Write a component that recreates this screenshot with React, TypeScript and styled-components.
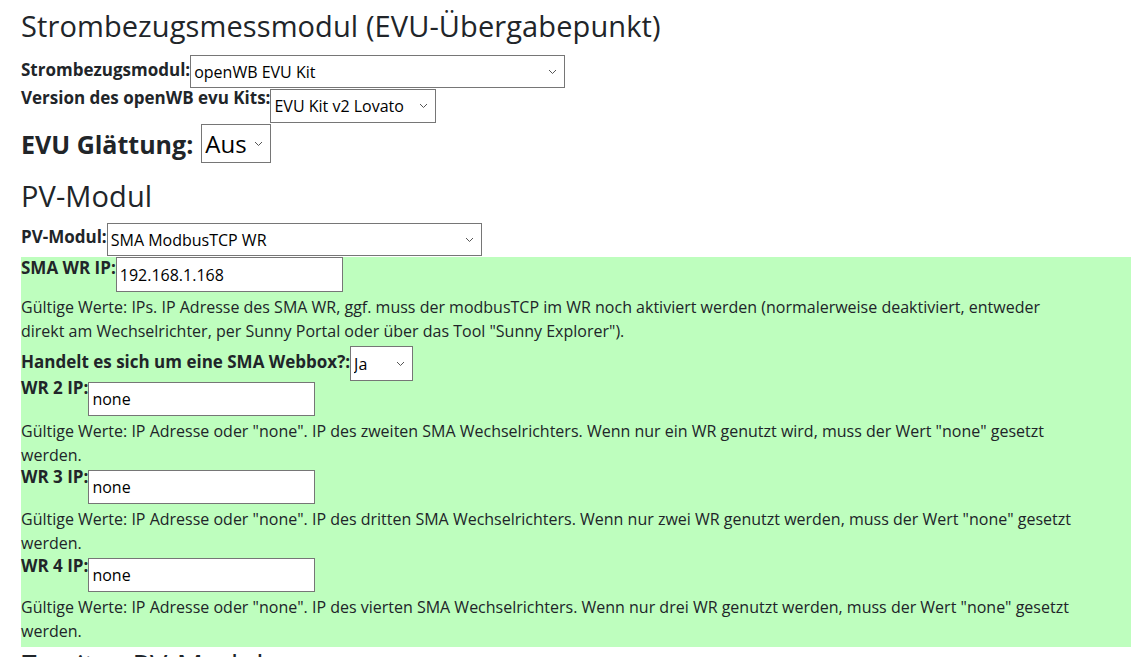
import React from "react";
import styled, { createGlobalStyle } from "styled-components";

const GlobalStyle = createGlobalStyle`
  body {
    margin: 0;
    background: #fff;
    color: #212529;
    font-family: "Open Sans", "Noto Sans", sans-serif;
    font-size: 16px;
  }
`;

const Page = styled.div`
  padding: 0 7px 0 21px;
  overflow: hidden;
  height: 657px;
`;

const SectionTitle = styled.h3<{ $top: number; $bottom: number }>`
  font-size: 29px;
  font-weight: 400;
  line-height: 34px;
  margin: ${(p) => p.$top}px 0 ${(p) => p.$bottom}px 0;
  letter-spacing: 0.1px;
`;

const FieldRow = styled.div<{ $gap?: number }>`
  display: flex;
  align-items: flex-start;
  margin-bottom: ${(p) => p.$gap ?? 1}px;
`;

const BigRow = styled.div`
  display: flex;
  align-items: center;
  gap: 8px;
`;

const FieldLabel = styled.label<{ $base: number }>`
  font-weight: 700;
  font-size: 17px;
  line-height: 16px;
  margin-top: ${(p) => p.$base - 14}px;
  white-space: nowrap;
`;

const BigLabel = styled.label`
  font-weight: 700;
  font-size: 25px;
  line-height: 30px;
`;

const SelectWrap = styled.div<{ $width: number; $height: number }>`
  position: relative;
  width: ${(p) => p.$width}px;
  height: ${(p) => p.$height}px;
  flex: none;
`;

const Select = styled.select<{ $size?: number }>`
  appearance: none;
  -webkit-appearance: none;
  width: 100%;
  height: 100%;
  box-sizing: border-box;
  border: 1px solid #767676;
  border-radius: 0;
  background: #fff;
  color: #000;
  font-family: "Open Sans", "Noto Sans", sans-serif;
  font-size: ${(p) => p.$size ?? 16}px;
  padding: 0 20px 0 3px;
  margin: 0;
  outline: none;
`;

const Chevron = styled.svg`
  position: absolute;
  right: 8px;
  top: 50%;
  margin-top: -3px;
  width: 9px;
  height: 6px;
  pointer-events: none;
`;

const TextInput = styled.input<{ $width: number; $height: number }>`
  box-sizing: border-box;
  width: ${(p) => p.$width}px;
  height: ${(p) => p.$height}px;
  border: 1px solid #767676;
  background: #fff;
  color: #000;
  font-family: "Open Sans", "Noto Sans", sans-serif;
  font-size: 16px;
  padding: 0 3px;
  margin: 0;
  flex: none;
  outline: none;
`;

const Highlight = styled.div`
  background: #befebe;
  width: 1110px;
  padding-bottom: 1px;
`;

const Help = styled.p`
  margin: 3px 0 3px 0;
  line-height: 24px;
  font-size: 16px;
`;

type DropProps = {
  value: string;
  width: number;
  height: number;
  size?: number;
};

const Dropdown = ({ value, width, height, size }: DropProps) => (
  <SelectWrap $width={width} $height={height}>
    <Select $size={size} defaultValue={value}>
      <option>{value}</option>
    </Select>
    <Chevron viewBox="0 0 9 6">
      <path d="M1 1l3.5 3.5L8 1" fill="none" stroke="#555" strokeWidth="1" />
    </Chevron>
  </SelectWrap>
);

export default function App() {
  return (
    <>
      <GlobalStyle />
      <Page>
        <SectionTitle $top={9} $bottom={12}>
          Strombezugsmessmodul (EVU-Übergabepunkt)
        </SectionTitle>
        <FieldRow>
          <FieldLabel $base={21}>Strombezugsmodul:</FieldLabel>
          <Dropdown value="openWB EVU Kit" width={375} height={33} />
        </FieldRow>
        <FieldRow>
          <FieldLabel $base={15}>Version des openWB evu Kits:</FieldLabel>
          <Dropdown value="EVU Kit v2 Lovato" width={166} height={34} />
        </FieldRow>
        <BigRow>
          <BigLabel>EVU Glättung:</BigLabel>
          <Dropdown value="Aus" width={70} height={39} size={24} />
        </BigRow>

        <SectionTitle $top={16} $bottom={10}>
          PV-Modul
        </SectionTitle>
        <FieldRow $gap={1}>
          <FieldLabel $base={20}>PV-Modul:</FieldLabel>
          <Dropdown value="SMA ModbusTCP WR" width={375} height={33} />
        </FieldRow>

        <Highlight>
          <FieldRow $gap={0}>
            <FieldLabel $base={17}>SMA WR IP:</FieldLabel>
            <TextInput $width={227} $height={35} defaultValue="192.168.1.168" />
          </FieldRow>
          <Help>
            Gültige Werte: IPs. IP Adresse des SMA WR, ggf. muss der modbusTCP im WR noch aktiviert werden (normalerweise deaktiviert, entweder
            <br />
            direkt am Wechselrichter, per Sunny Portal oder über das Tool "Sunny Explorer").
          </Help>
          <FieldRow>
            <FieldLabel $base={22}>Handelt es sich um eine SMA Webbox?:</FieldLabel>
            <Dropdown value="Ja" width={63} height={35} />
          </FieldRow>
          <FieldRow $gap={0}>
            <FieldLabel $base={12}>WR 2 IP:</FieldLabel>
            <TextInput $width={227} $height={34} defaultValue="none" />
          </FieldRow>
          <Help>
            Gültige Werte: IP Adresse oder "none". IP des zweiten SMA Wechselrichters. Wenn nur ein WR genutzt wird, muss der Wert "none" gesetzt
            <br />
            werden.
          </Help>
          <FieldRow $gap={0}>
            <FieldLabel $base={13}>WR 3 IP:</FieldLabel>
            <TextInput $width={227} $height={34} defaultValue="none" />
          </FieldRow>
          <Help>
            Gültige Werte: IP Adresse oder "none". IP des dritten SMA Wechselrichters. Wenn nur zwei WR genutzt werden, muss der Wert "none" gesetzt
            <br />
            werden.
          </Help>
          <FieldRow $gap={0}>
            <FieldLabel $base={14}>WR 4 IP:</FieldLabel>
            <TextInput $width={227} $height={34} defaultValue="none" />
          </FieldRow>
          <Help>
            Gültige Werte: IP Adresse oder "none". IP des vierten SMA Wechselrichters. Wenn nur drei WR genutzt werden, muss der Wert "none" gesetzt
            <br />
            werden.
          </Help>
        </Highlight>

        <SectionTitle $top={1} $bottom={8}>
          Zweites PV-Modul
        </SectionTitle>
      </Page>
    </>
  );
}
